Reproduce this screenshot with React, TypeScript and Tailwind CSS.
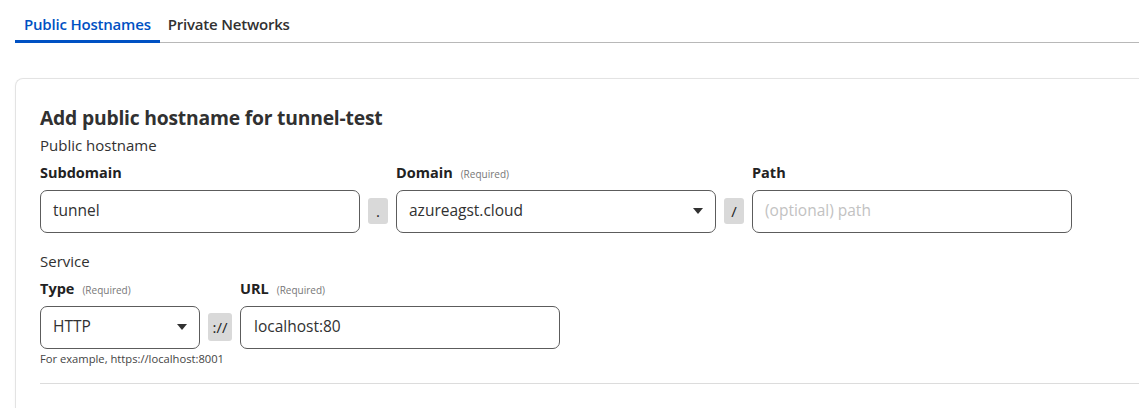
function Caret() {
  return (
    <svg width="10" height="6" viewBox="0 0 10 6" className="shrink-0">
      <path d="M0 0h10L5 6z" fill="#313131" />
    </svg>
  )
}

function Sep({ text, w = 'w-[20px] h-[26px]' }: { text: string; w?: string }) {
  return (
    <div className={`${w} rounded-[3px] bg-[#d9d9d9] flex items-center justify-center text-[15px] text-[#222]`}>
      {text}
    </div>
  )
}

function Label({ text, required = false }: { text: string; required?: boolean }) {
  return (
    <div className="flex items-baseline gap-[8px] h-[24px] mb-[4px]">
      <span className="text-[14.5px] font-bold text-[#222]">{text}</span>
      {required && <span className="text-[10px] text-[#777]">(Required)</span>}
    </div>
  )
}

export default function App() {
  return (
    <div className="w-[1139px] h-[408px] bg-white overflow-hidden text-[#313131]" style={{ fontFamily: '"Open Sans", "Noto Sans", sans-serif' }}>
      {/* Tabs */}
      <div className="pt-[13px] pl-[15px]">
        <div className="flex items-end border-b border-[#b8b8b8]">
          <div className="px-[9px] pb-[4px] border-b-[3px] border-[#0051c3] -mb-px text-[15px] font-semibold text-[#0051c3] tracking-[-0.2px]">
            Public Hostnames
          </div>
          <div className="px-[8px] pb-[6px] text-[15px] font-semibold text-[#313131] tracking-[-0.2px]">
            Private Networks
          </div>
        </div>
      </div>

      {/* Card */}
      <div className="mt-[35px] ml-[15px] border border-[#e3e3e3] rounded-tl-[8px] border-r-0 pl-[24px] pt-[26px] shadow-[0_1px_3px_rgba(0,0,0,0.04)]">
        <h2 className="text-[19.3px] font-bold text-[#313131] leading-[26px] tracking-[-0.2px]">
          Add public hostname for tunnel-test
        </h2>
        <div className="text-[15px] leading-[22px] mt-[3px]">Public hostname</div>

        <div className="flex items-end gap-[8px] mt-[6px]">
          <div>
            <Label text="Subdomain" />
            <div className="w-[320px] h-[43px] rounded-[7px] border border-[#5c5c5c] flex items-center px-[12px] text-[15.5px]">
              tunnel
            </div>
          </div>
          <div className="h-[43px] flex items-center">
            <Sep text="." />
          </div>
          <div>
            <Label text="Domain" required />
            <div className="w-[320px] h-[43px] rounded-[7px] border border-[#5c5c5c] flex items-center justify-between pl-[12px] pr-[12px] text-[15.5px]">
              <span>azureagst.cloud</span>
              <Caret />
            </div>
          </div>
          <div className="h-[43px] flex items-center">
            <Sep text="/" />
          </div>
          <div>
            <Label text="Path" />
            <div className="w-[320px] h-[43px] rounded-[7px] border border-[#5c5c5c] flex items-center px-[12px] text-[15.5px] text-[#c2c2c2]">
              (optional) path
            </div>
          </div>
        </div>

        <div className="text-[15px] leading-[22px] mt-[17px]">Service</div>

        <div className="flex items-end gap-[8px] mt-[6px]">
          <div>
            <Label text="Type" required />
            <div className="w-[160px] h-[43px] rounded-[7px] border border-[#5c5c5c] flex items-center justify-between px-[12px] text-[15.5px]">
              <span>HTTP</span>
              <Caret />
            </div>
          </div>
          <div className="h-[43px] flex items-center">
            <Sep text="://" w="w-[24px] h-[28px]" />
          </div>
          <div>
            <Label text="URL" required />
            <div className="w-[320px] h-[43px] rounded-[7px] border border-[#5c5c5c] flex items-center px-[13px] text-[15.5px]">
              localhost:80
            </div>
          </div>
        </div>
        <div className="text-[11.2px] text-[#444] mt-[3px] leading-[14px]">For example, https://localhost:8001</div>

        <div className="border-t border-[#dcdcdc] mt-[17px] h-[40px]" />
      </div>
    </div>
  )
}
